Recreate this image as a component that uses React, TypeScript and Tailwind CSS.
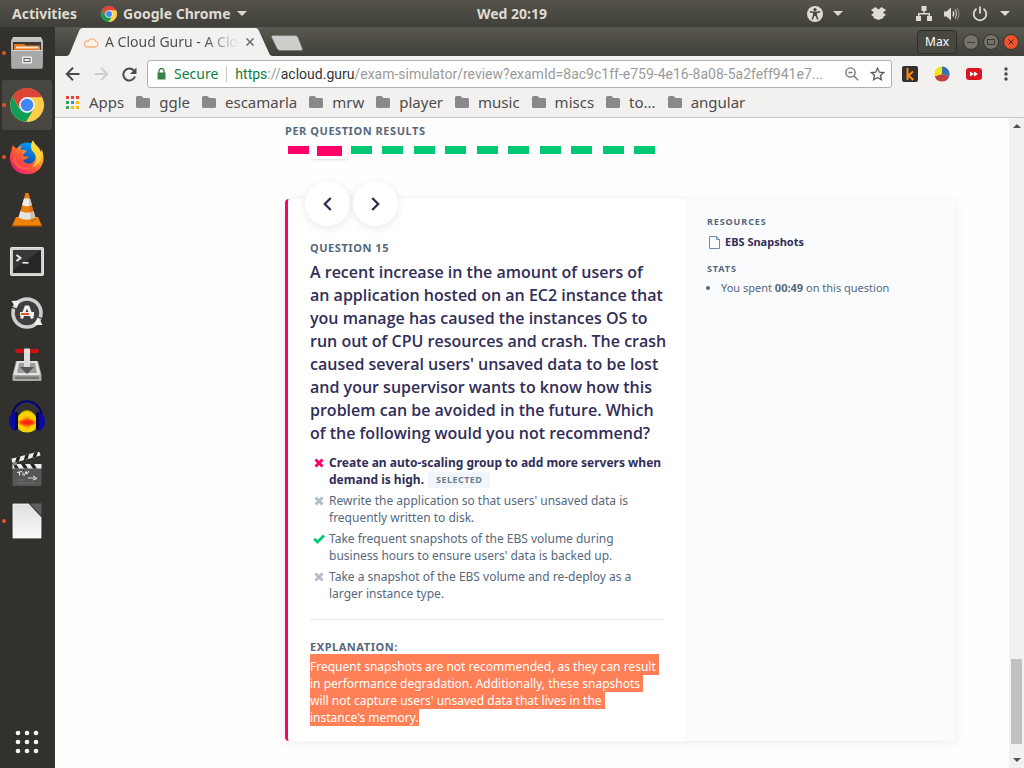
import React from "react";

const FONT = "font-['Noto_Sans','Liberation_Sans',sans-serif]";

function ChromeLogo({ className }: { className: string }) {
  return (
    <svg viewBox="0 0 34 34" className={className} aria-hidden="true">
      <circle cx="17" cy="17" r="16.8" fill="#ffcd48" />
      <path d="M17 17 L2.4 8.7 A16.8 16.8 0 0 1 31.6 8.7 Z" fill="#db4437" />
      <path d="M17 9 H31.8 A16.8 16.8 0 0 0 2.4 8.7 L10 21 Z" fill="#db4437" />
      <path d="M2.4 8.7 A16.8 16.8 0 0 0 16.3 33.8 L24 21 L17 17 L9.6 21 Z" fill="#0f9d58" />
      <path d="M17 9.2 H31.9 A16.8 16.8 0 0 1 16.3 33.8 L24 21 Z" fill="#ffcd48" />
      <circle cx="17" cy="17" r="7.9" fill="#f1f1f1" />
      <circle cx="17" cy="17" r="6.2" fill="#4285f4" />
    </svg>
  );
}

function FilesIcon() {
  return (
    <svg viewBox="0 0 34 34" className="size-[34px]" aria-hidden="true">
      <defs>
        <linearGradient id="files" x1="0" y1="0" x2="0" y2="1">
          <stop offset="0" stopColor="#c9c9c9" />
          <stop offset="1" stopColor="#8d8d8d" />
        </linearGradient>
      </defs>
      <path d="M3 1 H31 L33 5 V31 Q33 33 31 33 H3 Q1 33 1 31 V5 Z" fill="url(#files)" />
      <rect x="3" y="6" width="28" height="9" fill="#3c3833" />
      <path d="M4 8 H14 L16 9.5 H30 V15 H4 Z" fill="#dd7a20" />
      <path d="M6 10.5 H28 L30 15 H5 Z" fill="#f7e4c9" />
      <path d="M5 12.5 H29 V15 H5 Z" fill="#e8701c" />
      <rect x="2" y="14" width="30" height="18" rx="1" fill="#a9a9a9" />
      <path d="M2 14.5 H32" stroke="#d9d9d9" />
      <rect x="12" y="20.5" width="10" height="7" rx="1" fill="#eee" />
      <rect x="13.5" y="22" width="7" height="4" fill="#5b5b5b" />
      <rect x="14.5" y="23" width="5" height="2" fill="#ededed" />
    </svg>
  );
}

function FirefoxIcon() {
  return (
    <svg viewBox="0 0 36 36" className="size-9" aria-hidden="true">
      <defs>
        <linearGradient id="fox" x1="1" y1="0" x2="0.15" y2="1">
          <stop offset="0.05" stopColor="#fff44f" />
          <stop offset="0.35" stopColor="#ffb02e" />
          <stop offset="0.6" stopColor="#ff5a36" />
          <stop offset="1" stopColor="#e5157a" />
        </linearGradient>
        <linearGradient id="globe" x1="0.7" y1="0" x2="0.2" y2="1">
          <stop offset="0" stopColor="#00a2ff" />
          <stop offset="1" stopColor="#1c2f91" />
        </linearGradient>
      </defs>
      <circle cx="18" cy="16" r="12.4" fill="url(#globe)" />
      <path
        d="M4 6 C5 8 6 9 8 9.5 C9.5 8 11 7 13.5 6.5 C12 8 11.5 9.5 11.5 10.5 C13.500 11 15 11 17.500 11.500 C17.500 13.500 14 14.500 14 17 C15.500 17.500 18.500 17 20 18.500 C17.500 19 16.500 21 14 21 C16 25.500 22 26 25 22.500 C28 18.500 26 14.500 24 12.500 C21 9 22 4 24 1.500 C25 5 28 7 30 9 C31 11 31.500 12 32 13 C32.500 12 32.500 11 32.500 10 C36 18 35 25 30 30.500 C23 37.500 11 36.500 5 30 C0 24 0 16 2.500 12 C2.500 10 3 8 4 6 Z"
        fill="url(#fox)"
      />
      <path d="M24 1.500 C25 5 31 8 32 15 C33 21 29 27 23 28 C30 22 28 16 24 12.500 C21 9 22 4 24 1.500Z" fill="#ffdf3c" opacity="0.8" />
      <path d="M6 17 C7 26 15 31 24 28 C16 34 5 29 4 20Z" fill="#ff7139" opacity="0.65" />
    </svg>
  );
}

function VlcIcon() {
  return (
    <svg viewBox="0 0 32 35" className="h-[35px] w-8" aria-hidden="true">
      <path d="M5 25 H27 L31 34 H1 Z" fill="#f08408" />
      <path d="M1 33 H31 V34.500 H1 Z" fill="#c76003" />
      <path d="M14.500 1 H17.500 L25 28 Q16 33 7 28 Z" fill="#ee7f0b" />
      <path d="M13 6.500 H19 L21 13 Q16 15.500 11 13 Z" fill="#eeeeee" />
      <path d="M9.300 19 Q16 22.500 22.700 19 L24.500 25.500 Q16 30 7.500 25.500 Z" fill="#e4e4e4" />
      <path d="M17 1 H17.500 L25 28 Q22 30 20 30 Z" fill="#7d4a16" opacity="0.22" />
    </svg>
  );
}

function TerminalIcon() {
  return (
    <svg viewBox="0 0 34 30" className="h-[30px] w-[34px]" aria-hidden="true">
      <rect x="0.500" y="1.500" width="33" height="28" rx="1" fill="#d0d0d0" stroke="#e4e4e4" />
      <rect x="3" y="4" width="28" height="23" fill="#262626" />
      <path d="M3 4 H31 L3 24 Z" fill="#454545" opacity="0.6" />
      <path d="M6.500 9 L10.500 12 L6.500 15" fill="none" stroke="#f2f2f2" strokeWidth="1.800" />
      <path d="M12.500 16.800 H18.500" stroke="#f2f2f2" strokeWidth="1.600" />
    </svg>
  );
}

function UpdaterIcon() {
  return (
    <svg viewBox="0 0 34 34" className="size-[34px]" aria-hidden="true">
      <circle cx="17" cy="17" r="13" fill="#3f3f3f" />
      <circle cx="17" cy="17" r="14" fill="none" stroke="#cfcfcf" strokeWidth="3.600" />
      <path d="M1.500 5 L10 4.500 L6.500 12.500 Z" fill="#efefef" />
      <path d="M32.500 29 L23.500 29 L28 21 Z" fill="#efefef" />
      <path d="M0.800 11 L6 13 M28 21 L33 23" stroke="#33312d" strokeWidth="1.200" />
      <path d="M11.500 22.500 L16 11 H18 L22.500 22.500" fill="none" stroke="#f2f2f2" strokeWidth="3" />
      <rect x="10" y="16" width="14" height="4" fill="#f2f2f2" />
      <rect x="11" y="17" width="8" height="2" fill="#e95420" />
    </svg>
  );
}

function TransmissionIcon() {
  return (
    <svg viewBox="0 0 32 34" className="h-[34px] w-8" aria-hidden="true">
      <path d="M5 13 H27 L30.500 27 V32 Q30.500 33 29.500 33 H2.500 Q1.500 33 1.500 32 V27 Z" fill="#a8aaa8" />
      <path d="M6 13 H26 L29.500 27 H2.500 Z" fill="#e3e4e2" />
      <path d="M8 15 H24 L26 25 H6 Z" fill="#9c9e9c" />
      <rect x="4" y="28.500" width="24" height="2.500" rx="1" fill="#747674" />
      <path d="M13 4 H19 V19 H23 L16 26 L9 19 H13 Z" fill="#555855" />
      <rect x="13" y="4" width="6" height="15" fill="#dcdcdc" />
      <rect x="4" y="1" width="24" height="4" rx="2" fill="#d20f12" />
      <rect x="13" y="0.500" width="6" height="5" rx="1" fill="#e8e2e0" />
    </svg>
  );
}

function AudacityIcon() {
  return (
    <svg viewBox="0 0 36 34" className="h-[34px] w-9" aria-hidden="true">
      <defs>
        <radialGradient id="wave" cx="0.5" cy="0.550" r="0.560">
          <stop offset="0" stopColor="#ff2a0a" />
          <stop offset="0.250" stopColor="#ff6a09" />
          <stop offset="0.500" stopColor="#ffc800" />
          <stop offset="0.800" stopColor="#f2d800" />
          <stop offset="1" stopColor="#8f7a10" />
        </radialGradient>
        <radialGradient id="band">
          <stop offset="0" stopColor="#ff1a08" />
          <stop offset="0.550" stopColor="#ff3a08" />
          <stop offset="1" stopColor="#ff8a08" stopOpacity="0" />
        </radialGradient>
      </defs>
      <path d="M8 18 Q12 10 18 10 Q24 10 28 18 V29 Q23 32.500 18 32.500 Q13 32.500 8 29 Z" fill="url(#wave)" />
      <ellipse cx="18" cy="22.500" rx="11" ry="4" fill="url(#band)" />
      <path d="M3.500 18 C3.500 -4 32.500 -4 32.500 18" fill="none" stroke="#05055f" strokeWidth="2.600" />
      <path d="M5 15 C7 -1.500 29 -1.500 31 15" fill="none" stroke="#2739b8" strokeWidth="0.600" />
      <path d="M7 12 Q0 14 0 21 Q0 29 7 31 Z" fill="#0909a5" />
      <path d="M29 12 Q36 14 36 21 Q36 29 29 31 Z" fill="#0909a5" />
      <rect x="6" y="12" width="3" height="18" rx="1.500" fill="#03034d" />
      <rect x="27" y="12" width="3" height="18" rx="1.500" fill="#03034d" />
    </svg>
  );
}

function ClapperIcon() {
  return (
    <svg viewBox="0 0 32 35" className="h-[35px] w-8" aria-hidden="true">
      <rect x="1.500" y="15" width="29" height="19" rx="1" fill="#565656" />
      <rect x="1.500" y="12" width="29" height="4.500" fill="#ededed" />
      <path d="M2 12 H5 L8 16.500 H4 Z M10 12 H14 L17 16.500 H13 Z M19 12 H23 L26 16.500 H22 Z" fill="#222" />
      <g transform="rotate(-15 2 11)">
        <rect x="1.500" y="6.500" width="29" height="4.500" fill="#ededed" />
        <path d="M7 6.500 L4 11 H8 L11 6.500 Z M16 6.500 L13 11 H17 L20 6.500 Z M25 6.500 L22 11 H26 L29 6.500 Z" fill="#222" />
      </g>
      <circle cx="4" cy="11.500" r="2" fill="#888" />
      <path d="M6 20.500 L11 19.500 M8.500 20 V23.500 M12 20.500 V23.500 M13.500 23.500 L15 19.500 L16 22 L18 19" stroke="#eee" strokeWidth="1" fill="none" />
      <path d="M17 26 H25 M22 24 L26 26.500 L22 28" stroke="#ddd" strokeWidth="1" fill="none" />
      <path d="M6 28 H14 M6 31 H24" stroke="#777" strokeWidth="0.800" />
    </svg>
  );
}

function DocumentIcon() {
  return (
    <svg viewBox="0 0 30 36" className="h-9 w-[30px]" aria-hidden="true">
      <defs>
        <linearGradient id="paper" x1="0" y1="0" x2="0" y2="1">
          <stop offset="0" stopColor="#dedede" />
          <stop offset="1" stopColor="#fafafa" />
        </linearGradient>
      </defs>
      <path d="M1 1 H17 L29 14 V35 H1 Z" fill="url(#paper)" stroke="#fff" strokeWidth="0.800" />
      <path d="M16.500 0.500 H29.500 V14.500 Z" fill="#3f3f3f" />
      <path d="M18 0.500 L29.500 12.500 V0.500 Z" fill="#5f5f5f" />
    </svg>
  );
}

function AppsGridIcon() {
  return (
    <svg viewBox="0 0 24 24" className="size-6" fill="#f4f4f2" aria-hidden="true">
      {[3, 12, 21].map((y) => [3, 12, 21].map((x) => <circle key={`${x}-${y}`} cx={x} cy={y} r="2.300" />))}
    </svg>
  );
}

const DOCK = [
  { name: "Files", icon: <FilesIcon />, running: true, active: false },
  { name: "Google Chrome", icon: <ChromeLogo className="size-[34px]" />, running: true, active: true },
  { name: "Firefox", icon: <FirefoxIcon />, running: true, active: false },
  { name: "VLC", icon: <VlcIcon />, running: false, active: false },
  { name: "Terminal", icon: <TerminalIcon />, running: false, active: false },
  { name: "Software Updater", icon: <UpdaterIcon />, running: false, active: false },
  { name: "Transmission", icon: <TransmissionIcon />, running: false, active: false },
  { name: "Audacity", icon: <AudacityIcon />, running: false, active: false },
  { name: "OpenShot", icon: <ClapperIcon />, running: false, active: false },
  { name: "LibreOffice", icon: <DocumentIcon />, running: true, active: false },
];

function Caret() {
  return (
    <svg viewBox="0 0 10 5" className="h-[5px] w-[10px]" aria-hidden="true">
      <path d="M0 0 H10 L5 5 Z" fill="#dfdbd2" />
    </svg>
  );
}

function TopBar() {
  return (
    <header className="grid h-[27px] shrink-0 grid-cols-[1fr_auto_1fr] items-center bg-linear-to-b from-[#55534b] to-[#403f39] text-sm font-bold text-[#dfdbd2]">
      <div className="flex items-center pl-3">
        <button className="mr-6">Activities</button>
        <button className="flex items-center gap-[6px]">
          <ChromeLogo className="size-4" />
          <span>Google Chrome</span>
          <Caret />
        </button>
      </div>
      <button>Wed 20:19</button>
      <div className="flex items-center justify-end pr-[14px]">
        <button aria-label="Accessibility" className="flex items-center gap-[10px]">
          <svg viewBox="0 0 16 16" className="size-4" aria-hidden="true">
            <circle cx="8" cy="8" r="8" fill="#dfdbd2" />
            <circle cx="8" cy="3.600" r="1.600" fill="#484740" />
            <path d="M2.800 5.800 L6.500 6.300 H9.500 L13.200 5.800 M6.700 6.500 V9.500 L5.200 13.500 M9.300 6.500 V9.500 L10.800 13.500" stroke="#484740" strokeWidth="1.500" fill="none" />
            <path d="M6 6 H10 V10 H6 Z" fill="#484740" />
          </svg>
          <Caret />
        </button>
        <button aria-label="Dropbox" className="ml-[28px]">
          <svg viewBox="0 0 15 13" className="h-[13px] w-[15px]" fill="#dfdbd2" aria-hidden="true">
            <path d="M4.500 0 L7.500 2.500 L10.500 0 L15 3 L12 5.500 L15 8 L12.500 9.500 V11 L7.500 13 L2.500 11 V9.500 L0 8 L3 5.500 L0 3 Z" />
          </svg>
        </button>
        <button aria-label="System menu" className="ml-[30px] flex items-center gap-3">
          <svg viewBox="0 0 16 15" className="h-[15px] w-4" fill="#dfdbd2" aria-hidden="true">
            <path d="M5.500 0 H10.500 V5 H8.700 V7 H14 V10 H16 V15 H11 V10 H12.500 V8.500 H3.500 V10 H5 V15 H0 V10 H2 V7 H7.300 V5 H5.500 Z" />
          </svg>
          <svg viewBox="0 0 16 14" className="h-[14px] w-4" aria-hidden="true">
            <path d="M0 4.500 H2.500 L7 0.500 V13.500 L2.500 9.500 H0 Z" fill="#dfdbd2" />
            <path d="M9 4.500 Q10.500 7 9 9.500" stroke="#dfdbd2" strokeWidth="1.500" fill="none" />
            <path d="M11 2.500 Q14 7 11 11.500" stroke="#dfdbd2" strokeWidth="1.400" fill="none" opacity="0.700" />
            <path d="M13 1 Q17 7 13 13" stroke="#dfdbd2" strokeWidth="1.200" fill="none" opacity="0.400" />
          </svg>
          <svg viewBox="0 0 16 16" className="size-4" fill="none" stroke="#dfdbd2" strokeWidth="1.800" aria-hidden="true">
            <path d="M4.500 2.800 A6.300 6.300 0 1 0 11.500 2.800 M8 0.500 V7.500" />
          </svg>
          <Caret />
        </button>
      </div>
    </header>
  );
}

function Dock() {
  return (
    <nav aria-label="Dock" className="flex w-[55px] shrink-0 flex-col gap-[2px] bg-[#33312d] py-px pl-[2px]">
      {DOCK.map((item) => (
        <button
          key={item.name}
          aria-label={item.name}
          className={`relative flex size-[50px] items-center justify-center rounded-[3px] ${item.active ? "bg-[#484641]" : ""}`}
        >
          {item.icon}
          {item.running && <span className="absolute top-[23px] left-0 size-[4px] rounded-full bg-[#e95420]" />}
        </button>
      ))}
      <button aria-label="Show Applications" className="mt-auto flex size-[50px] items-center justify-center">
        <AppsGridIcon />
      </button>
    </nav>
  );
}

function TabStrip() {
  return (
    <div className="flex h-[29px] items-end bg-linear-to-b from-[#5a5850] to-[#403f39] pl-3">
      <div className="relative flex h-7 w-[205px] items-center">
        <svg viewBox="0 0 205 28" preserveAspectRatio="none" className="absolute inset-0 size-full" aria-hidden="true">
          <path d="M0 28 Q2 28 3 25 L12 3 Q13 0 16 0 H188 Q191 0 192 3 L202 25 Q203 28 205 28 Z" fill="#f2f1f0" />
        </svg>
        <div className="relative flex w-full items-center pl-4">
          <svg viewBox="0 0 17 11" className="mr-[5px] h-[11px] w-[17px]" aria-hidden="true">
            <path d="M4 10 H13 A3 3 0 0 0 13 4.500 A4.500 4.500 0 0 0 5 4 A3 3 0 0 0 4 10 Z" fill="#fff1e4" stroke="#f8b18d" strokeWidth="1.300" />
          </svg>
          <span className="w-[133px] overflow-hidden bg-linear-to-r from-[#4c4c4c] from-75% to-transparent bg-clip-text text-sm whitespace-nowrap text-transparent">
            A Cloud Guru - A Clo
          </span>
          <button aria-label="Close tab" className="ml-2">
            <svg viewBox="0 0 8 8" className="size-2" stroke="#6b6b6b" strokeWidth="1.500" aria-hidden="true">
              <path d="M0.500 0.500 L7.500 7.500 M7.500 0.500 L0.500 7.500" />
            </svg>
          </button>
        </div>
      </div>
      <button aria-label="New tab" className="mb-[5px] -ml-[2px]">
        <svg viewBox="0 0 34 16" className="h-4 w-[34px]" aria-hidden="true">
          <path d="M3 0.500 H25 Q27 0.500 28 2.500 L32.500 14 Q33 15.500 31 15.500 H10 Q8 15.500 7 13.500 L1.500 2 Q1 0.500 3 0.500 Z" fill="#cfcdcb" stroke="#6b6963" strokeWidth="0.500" />
        </svg>
      </button>
      <div className="ml-auto flex h-full items-center gap-1 pr-[5px]">
        <button className="mr-[2px] h-6 w-10 rounded-[4px] border border-[#2f2e2a] bg-[#484740] text-xs text-white">Max</button>
        <button aria-label="Minimize" className="flex size-4 items-center justify-center rounded-full border border-[#33322e] bg-[#75736b]">
          <svg viewBox="0 0 8 8" className="size-2" aria-hidden="true"><path d="M0 4.500 H8" stroke="#3c3b37" /></svg>
        </button>
        <button aria-label="Maximize" className="flex size-4 items-center justify-center rounded-full border border-[#33322e] bg-[#75736b]">
          <svg viewBox="0 0 8 8" className="size-2" aria-hidden="true"><rect x="0.500" y="1.500" width="7" height="5" fill="none" stroke="#3c3b37" /></svg>
        </button>
        <button aria-label="Close" className="flex size-4 items-center justify-center rounded-full border border-[#33322e] bg-[#f0532c]">
          <svg viewBox="0 0 8 8" className="size-2" aria-hidden="true"><path d="M1.500 1.500 L6.500 6.500 M6.500 1.500 L1.500 6.500" stroke="#472016" /></svg>
        </button>
      </div>
    </div>
  );
}

function Toolbar() {
  return (
    <div className="flex h-9 items-center bg-[#f2f1f0] pl-[10px]">
      <button aria-label="Back" className="mr-[14px]">
        <svg viewBox="0 0 15 14" className="h-[14px] w-[15px]" fill="none" stroke="#4a4a4a" strokeWidth="2" aria-hidden="true">
          <path d="M14.500 7 H2 M8 0.800 L1.800 7 L8 13.200" />
        </svg>
      </button>
      <button aria-label="Forward" className="mr-[13px]">
        <svg viewBox="0 0 15 14" className="h-[14px] w-[15px]" fill="none" stroke="#cfcfcf" strokeWidth="2" aria-hidden="true">
          <path d="M0.500 7 H13 M7 0.800 L13.200 7 L7 13.200" />
        </svg>
      </button>
      <button aria-label="Reload" className="mr-[10px]">
        <svg viewBox="0 0 15 15" className="size-[15px]" aria-hidden="true">
          <path d="M13 9.500 A6 6 0 1 1 11.800 3.500" fill="none" stroke="#4a4a4a" strokeWidth="2" />
          <path d="M14.500 0.500 V7 H8 Z" fill="#4a4a4a" />
        </svg>
      </button>
      <div className="flex h-7 min-w-0 flex-1 items-center rounded-[3px] border border-[#b1b0af] bg-white pr-[6px] pl-[9px] text-sm">
        <svg viewBox="0 0 9 12" className="mr-2 h-3 w-[9px]" aria-hidden="true">
          <path d="M2 5 V3 A2.500 2.500 0 0 1 7 3 V5" fill="none" stroke="#3a8244" strokeWidth="1.300" />
          <rect x="0.500" y="4.500" width="8" height="7" fill="#3a8244" />
        </svg>
        <span className="text-[#0b8043]">Secure</span>
        <span className="mx-2 h-4 w-px bg-[#c6c6c6]" />
        <p className="min-w-0 flex-1 overflow-hidden font-['Roboto','Noto_Sans',sans-serif] whitespace-nowrap text-[#9a9a9a]">
          <span className="text-[#0b8043]">https</span>://<span className="text-[#333]">acloud.guru</span>/exam-simulator/review?examId=8ac9c1ff-e759-4e16-8a08-5a2feff941e7...
        </p>
        <button aria-label="Zoom" className="ml-2">
          <svg viewBox="0 0 14 14" className="size-[14px]" fill="none" stroke="#777" strokeWidth="1.400" aria-hidden="true">
            <circle cx="5.500" cy="5.500" r="4.600" />
            <path d="M9 9 L13.200 13.200 M3.500 5.500 H7.500" />
          </svg>
        </button>
        <button aria-label="Bookmark" className="ml-[11px]">
          <svg viewBox="0 0 15 14" className="h-[14px] w-[15px]" fill="none" stroke="#5a5a5a" strokeWidth="1.300" aria-hidden="true">
            <path d="M7.500 1.200 L9.300 5.200 L13.700 5.600 L10.400 8.500 L11.400 12.800 L7.500 10.500 L3.600 12.800 L4.600 8.500 L1.300 5.600 L5.700 5.200 Z" />
          </svg>
        </button>
      </div>
      <div className="flex items-center gap-4 pr-4 pl-[10px]">
        <button aria-label="Extension k">
          <svg viewBox="0 0 16 16" className="size-4" aria-hidden="true">
            <rect width="16" height="16" rx="2" fill="#303030" />
            <path d="M5.500 2 V14 M11 5.500 L6.500 9.500 L11.300 14" fill="none" stroke="#ff8a0c" strokeWidth="2" />
          </svg>
        </button>
        <button aria-label="Extension chart">
          <svg viewBox="0 0 16 16" className="size-4" aria-hidden="true">
            <path d="M8 8 V0.500 A7.500 7.500 0 0 1 15.200 10.200 Z" fill="#3474ac" />
            <path d="M8 8 L15.200 10.200 A7.500 7.500 0 0 1 0.800 10.200 Z" fill="#c04343" />
            <path d="M8 8 L0.800 10.200 A7.500 7.500 0 0 1 8 0.500 Z" fill="#f5e614" />
          </svg>
        </button>
        <button aria-label="Extension player">
          <svg viewBox="0 0 16 12" className="h-3 w-4" aria-hidden="true">
            <rect width="16" height="12" rx="3" fill="#dc1420" />
            <path d="M4 3.500 L8 6 L4 8.500 Z M8 3.500 L12 6 L8 8.500 Z" fill="#fff" />
          </svg>
        </button>
        <button aria-label="Menu" className="pl-[6px]">
          <svg viewBox="0 0 4 14" className="h-[14px] w-1" fill="#4a4a4a" aria-hidden="true">
            <circle cx="2" cy="2" r="1.700" />
            <circle cx="2" cy="7" r="1.700" />
            <circle cx="2" cy="12" r="1.700" />
          </svg>
        </button>
      </div>
    </div>
  );
}

const BOOKMARKS = ["ggle", "escamarla", "mrw", "player", "music", "miscs", "to...", "angular"];
const APP_DOTS = ["#ea4335", "#ea4335", "#ea4335", "#34a853", "#4285f4", "#fbbc05", "#34a853", "#fbbc05", "#fbbc05"];

function Bookmarks() {
  return (
    <nav aria-label="Bookmarks" className="flex h-[26px] items-start gap-3 border-b border-[#c9c8c7] bg-[#f2f1f0] pl-[11px] text-[15px] leading-5 text-[#4c4c4c]">
      <button className="flex items-center gap-[10px]">
        <svg viewBox="0 0 13 13" className="size-[13px]" aria-hidden="true">
          {APP_DOTS.map((fill, i) => (
            <rect key={i} x={(i % 3) * 5} y={Math.floor(i / 3) * 5} width="3" height="3" fill={fill} />
          ))}
        </svg>
        Apps
      </button>
      {BOOKMARKS.map((name) => (
        <button key={name} className="flex items-center gap-[9px]">
          <svg viewBox="0 0 14 12" className="h-3 w-[14px]" aria-hidden="true">
            <path d="M0 1.500 Q0 0 1.500 0 H5.500 L7.500 2 H12.500 Q14 2 14 3.500 V10.500 Q14 12 12.500 12 H1.500 Q0 12 0 10.500 Z" fill="#898989" />
          </svg>
          {name}
        </button>
      ))}
    </nav>
  );
}

const RESULTS = [false, false, true, true, true, true, true, true, true, true, true, true];

function ResultBar() {
  return (
    <section>
      <h2 className="text-[11px] leading-4 font-bold tracking-wider text-[#56687d]">PER QUESTION RESULTS</h2>
      <div className="mt-[7px] flex h-[13px] w-[370px] justify-between pl-[3px]">
        {RESULTS.map((ok, i) =>
          i === 1 ? (
            <button key={i} aria-label={`Question ${i + 1}`} className="-mx-[7px] -mt-1 h-[17px] w-[35px] bg-white px-[5px] pt-1 pb-[3px] shadow-sm">
              <span className="block h-[10px] bg-[#ff0066]" />
            </button>
          ) : (
            <button key={i} aria-label={`Question ${i + 1}`} className={`h-2 w-[21px] ${ok ? "bg-[#00c872]" : "bg-[#ff0066]"}`} />
          ),
        )}
      </div>
    </section>
  );
}

function Mark({ kind }: { kind: "wrong" | "muted" | "right" }) {
  if (kind === "right") {
    return (
      <svg viewBox="0 0 12 10" className="mt-1 h-[10px] w-3" fill="none" stroke="#00c872" strokeWidth="2.800" aria-hidden="true">
        <path d="M1.200 4.800 L4.500 8 L11 1.500" />
      </svg>
    );
  }
  return (
    <svg viewBox="0 0 12 10" className="mt-1 h-[10px] w-3" fill="none" stroke={kind === "wrong" ? "#ff0066" : "#b2bdc9"} strokeWidth="2.900" aria-hidden="true">
      <path d="M2.500 1.500 L9.500 8.500 M9.500 1.500 L2.500 8.500" />
    </svg>
  );
}

const ANSWERS: { kind: "wrong" | "muted" | "right"; lines: [string, string] }[] = [
  { kind: "wrong", lines: ["Create an auto-scaling group to add more servers when", "demand is high."] },
  { kind: "muted", lines: ["Rewrite the application so that users' unsaved data is", "frequently written to disk."] },
  { kind: "right", lines: ["Take frequent snapshots of the EBS volume during", "business hours to ensure users' data is backed up."] },
  { kind: "muted", lines: ["Take a snapshot of the EBS volume and re-deploy as a", "larger instance type."] },
];

const QUESTION = [
  "A recent increase in the amount of users of",
  "an application hosted on an EC2 instance that",
  "you manage has caused the instances OS to",
  "run out of CPU resources and crash. The crash",
  "caused several users' unsaved data to be lost",
  "and your supervisor wants to know how this",
  "problem can be avoided in the future. Which",
  "of the following would you not recommend?",
];

const EXPLANATION = [
  "Frequent snapshots are not recommended, as they can result",
  "in performance degradation. Additionally, these snapshots",
  "will not capture users' unsaved data that lives in the",
  "instance's memory.",
];

function QuestionCard() {
  return (
    <article className="mt-10 flex rounded-[4px] border-l-3 border-[#ff0066] bg-white shadow-[0_2px_12px_rgba(30,40,60,0.08)]">
      <div className="min-w-0 flex-1 pr-[22px] pb-[15px] pl-[22px] whitespace-nowrap">
        <div className="-mt-[18px] -ml-[5px] flex gap-[3px]">
          <button aria-label="Previous question" className="flex size-[45px] items-center justify-center rounded-full bg-white shadow-[0_2px_8px_rgba(30,40,60,0.10)]">
            <svg viewBox="0 0 9 14" className="h-[14px] w-[9px]" fill="none" stroke="#312e58" strokeWidth="2.400" aria-hidden="true">
              <path d="M7.800 1 L1.800 7 L7.800 13" />
            </svg>
          </button>
          <button aria-label="Next question" className="flex size-[45px] items-center justify-center rounded-full bg-white shadow-[0_2px_8px_rgba(30,40,60,0.10)]">
            <svg viewBox="0 0 9 14" className="h-[14px] w-[9px]" fill="none" stroke="#312e58" strokeWidth="2.400" aria-hidden="true">
              <path d="M1.200 1 L7.200 7 L1.200 13" />
            </svg>
          </button>
        </div>
        <h3 className="mt-[14px] text-[11px] leading-4 font-bold tracking-wider text-[#56687d]">QUESTION 15</h3>
        <p className="mt-[5px] font-['Open_Sans','Noto_Sans',sans-serif] text-base leading-[23px] font-semibold text-[#312e58]">
          {QUESTION.map((line) => (
            <span key={line} className="block">{line}</span>
          ))}
        </p>
        <ul className="mt-[9px] space-y-1 text-xs leading-[17px] text-[#56687d]">
          {ANSWERS.map((a) => (
            <li key={a.lines[0]} className={`flex gap-1 pl-[3px] ${a.kind === "wrong" ? "font-bold text-[#312e58]" : ""}`}>
              <Mark kind={a.kind} />
              <div>
                <div>{a.lines[0]}</div>
                <div className="flex items-center gap-1">
                  {a.lines[1]}
                  {a.kind === "wrong" && (
                    <span className="rounded-[2px] bg-[#f2f6fa] px-2 text-[9px] leading-4 tracking-wider text-[#6b8096]">SELECTED</span>
                  )}
                </div>
              </div>
            </li>
          ))}
        </ul>
        <hr className="mt-[17px] border-[#e9e9eb]" />
        <h3 className="mt-[19px] text-[11px] leading-4 font-bold tracking-wider text-[#56687d]">EXPLANATION:</h3>
        <p className="-mt-px text-xs leading-[17px] text-white">
          {EXPLANATION.map((line, i) => (
            <span key={line} className={`block w-fit bg-[#ff7f57] ${i === 0 ? "pt-1" : ""} ${i < 3 ? "pr-[3px]" : ""}`}>{line}</span>
          ))}
        </p>
      </div>
      <aside className="w-[270px] shrink-0 rounded-r-[4px] bg-[#fafbfd] pt-[15px] pl-[22px] text-[#56687d]">
        <h4 className="text-[9px] leading-4 font-bold tracking-widest">RESOURCES</h4>
        <a href="#ebs" className="mt-1 flex items-center gap-[5px] text-[11px] leading-4 font-bold text-[#312e58]">
          <svg viewBox="0 0 11 13" className="ml-[2px] h-[13px] w-[11px]" fill="none" stroke="#7189a1" aria-hidden="true">
            <path d="M0.500 0.500 H7.500 L10.500 3.500 V12.500 H0.500 Z M7.500 0.500 V3.500 H10.500" />
          </svg>
          EBS Snapshots
        </a>
        <h4 className="mt-[11px] text-[9px] leading-4 font-bold tracking-widest">STATS</h4>
        <ul className="mt-[3px] list-disc pl-[14px] text-[11px] leading-4">
          <li>
            You spent <b>00:49</b> on this question
          </li>
        </ul>
      </aside>
    </article>
  );
}

function ScrollBar() {
  return (
    <div aria-hidden="true" className="flex w-[15px] shrink-0 flex-col items-center bg-[#f1f1f1] py-[6px]">
      <svg viewBox="0 0 8 4" className="h-1 w-2"><path d="M0 4 H8 L4 0 Z" fill="#505050" /></svg>
      <span className="mt-auto mb-[14px] h-[85px] w-[11px] bg-[#c1c1c1]" />
      <svg viewBox="0 0 8 4" className="h-1 w-2"><path d="M0 0 H8 L4 4 Z" fill="#505050" /></svg>
    </div>
  );
}

export default function App() {
  return (
    <div className={`flex h-screen flex-col overflow-hidden ${FONT}`}>
      <TopBar />
      <div className="flex min-h-0 flex-1">
        <Dock />
        <div className="flex min-w-0 flex-1 flex-col">
          <TabStrip />
          <Toolbar />
          <Bookmarks />
          <div className="flex min-h-0 flex-1 bg-[#fefefe]">
            <main className="min-w-0 flex-1 overflow-hidden pt-[5px] pr-[54px] pl-[230px]">
              <ResultBar />
              <QuestionCard />
            </main>
            <ScrollBar />
          </div>
        </div>
      </div>
    </div>
  );
}
